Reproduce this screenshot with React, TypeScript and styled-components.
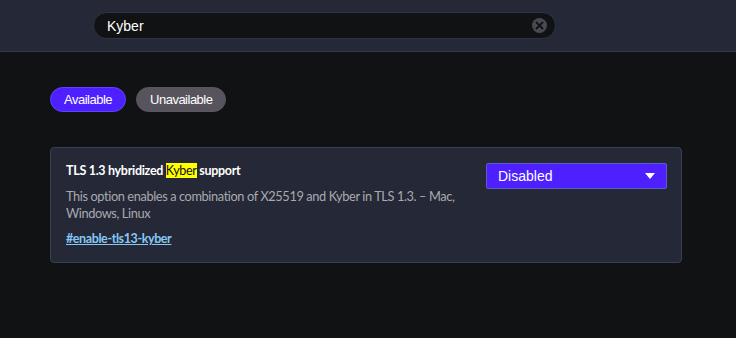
import styled, { createGlobalStyle } from "styled-components";

const GlobalStyle = createGlobalStyle`
  html, body {
    margin: 0;
    padding: 0;
    background: #111214;
  }
  body {
    font-family: "Liberation Sans", Arial, sans-serif;
    color: #e8eaed;
  }
`;

const Page = styled.div`
  min-height: 338px;
  background: #111214;
`;

const Header = styled.header`
  height: 52px;
  box-sizing: border-box;
  background: #252836;
  border-bottom: 1px solid #363a4a;
  display: flex;
  align-items: center;
  padding-left: 93px;
`;

const SearchBox = styled.div`
  width: 463px;
  height: 27px;
  box-sizing: border-box;
  background: #111214;
  border: 1px solid #2f3344;
  border-radius: 14px;
  display: flex;
  align-items: center;
  padding: 0 8px 0 13px;
`;

const SearchInput = styled.input`
  flex: 1;
  background: transparent;
  border: none;
  outline: none;
  color: #ffffff;
  font-family: "Liberation Sans", Arial, sans-serif;
  font-size: 14px;
  padding: 0;
`;

const ClearButton = styled.button`
  width: 15px;
  height: 15px;
  padding: 0;
  border: none;
  border-radius: 50%;
  background: #474a52;
  display: flex;
  align-items: center;
  justify-content: center;
  cursor: pointer;
`;

const Main = styled.main`
  padding: 35px 54px 0 50px;
`;

const Tabs = styled.div`
  display: flex;
  gap: 10px;
`;

const Tab = styled.button<{ $active?: boolean }>`
  height: 25px;
  padding: 0 13px;
  border-radius: 13px;
  border: 1px solid ${(p) => (p.$active ? "#5b45ff" : "#5a5760")};
  background: ${(p) => (p.$active ? "#4e1fff" : "#57545d")};
  color: #ffffff;
  font-family: "Liberation Sans", Arial, sans-serif;
  font-size: 13px;
  letter-spacing: -0.5px;
  cursor: pointer;
`;

const Card = styled.section`
  margin-top: 35px;
  box-sizing: border-box;
  width: 632px;
  height: 116px;
  background: #252836;
  border: 1px solid #3a3f52;
  border-radius: 4px;
  padding: 14px 14px 0 15px;
  display: flex;
  justify-content: space-between;
  font-family: Lato, "Noto Sans", sans-serif;
`;

const Info = styled.div`
  width: 415px;
`;

const Title = styled.h3`
  margin: 0;
  font-size: 12.5px;
  font-weight: 700;
  color: #ffffff;
  line-height: 18px;
  letter-spacing: -0.3px;
`;

const Highlight = styled.mark`
  background: #ffff00;
  color: #111214;
  font-weight: 400;
`;

const Description = styled.p`
  margin: 8px 0 0;
  font-size: 12.8px;
  line-height: 17px;
  letter-spacing: -0.4px;
  color: #a8aab0;
`;

const Permalink = styled.a`
  display: inline-block;
  margin-top: 9px;
  font-size: 12.5px;
  font-weight: 700;
  letter-spacing: -0.4px;
  color: #86c8f5;
  text-decoration: underline;
`;

const Select = styled.button`
  width: 181px;
  height: 26px;
  margin-top: 1px;
  box-sizing: border-box;
  background: #4e1fff;
  border: 1px solid #5f5bc8;
  border-radius: 2px;
  padding: 0 11px 0 11px;
  display: flex;
  align-items: center;
  justify-content: space-between;
  color: #ffffff;
  font-family: "Liberation Sans", Arial, sans-serif;
  font-size: 14px;
  cursor: pointer;
`;

const App = (): JSX.Element => {
  return (
    <>
      <GlobalStyle />
      <Page>
        <Header>
          <SearchBox>
            <SearchInput defaultValue="Kyber" />
            <ClearButton aria-label="Clear search">
              <svg width="9" height="9" viewBox="0 0 9 9">
                <path
                  d="M1.5 1.5 L7.5 7.5 M7.5 1.5 L1.5 7.5"
                  stroke="#111214"
                  strokeWidth="1.8"
                  strokeLinecap="round"
                />
              </svg>
            </ClearButton>
          </SearchBox>
        </Header>
        <Main>
          <Tabs>
            <Tab $active>Available</Tab>
            <Tab>Unavailable</Tab>
          </Tabs>
          <Card>
            <Info>
              <Title>
                TLS 1.3 hybridized <Highlight>Kyber</Highlight> support
              </Title>
              <Description>
                This option enables a combination of X25519 and Kyber in TLS
                1.3. – Mac, Windows, Linux
              </Description>
              <Permalink href="#enable-tls13-kyber">#enable-tls13-kyber</Permalink>
            </Info>
            <Select>
              Disabled
              <svg width="10" height="6" viewBox="0 0 10 6">
                <path d="M0 0 H10 L5 6 Z" fill="#ffffff" />
              </svg>
            </Select>
          </Card>
        </Main>
      </Page>
    </>
  );
};

export default App;
